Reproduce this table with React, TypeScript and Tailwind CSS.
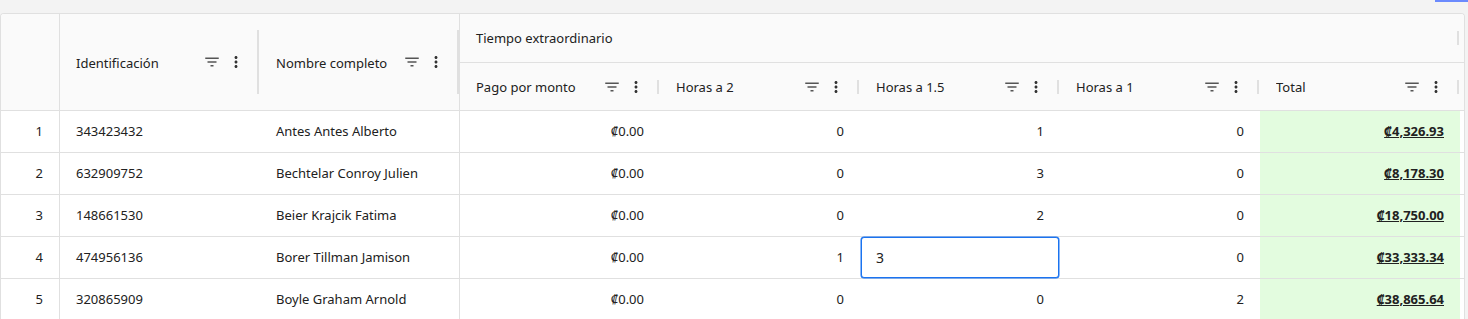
import React from 'react';

type Row = {
    n: number;
    id: string;
    name: string;
    monto: string;
    h2: string;
    h15: string;
    h1: string;
    total: string;
    editing?: boolean;
};

const ROWS: Row[] = [
    { n: 1, id: '343423432', name: 'Antes Antes Alberto', monto: '₡0.00', h2: '0', h15: '1', h1: '0', total: '₡4,326.93' },
    { n: 2, id: '632909752', name: 'Bechtelar Conroy Julien', monto: '₡0.00', h2: '0', h15: '3', h1: '0', total: '₡8,178.30' },
    { n: 3, id: '148661530', name: 'Beier Krajcik Fatima', monto: '₡0.00', h2: '0', h15: '2', h1: '0', total: '₡18,750.00' },
    { n: 4, id: '474956136', name: 'Borer Tillman Jamison', monto: '₡0.00', h2: '1', h15: '3', h1: '0', total: '₡33,333.34', editing: true },
    { n: 5, id: '320865909', name: 'Boyle Graham Arnold', monto: '₡0.00', h2: '0', h15: '0', h1: '2', total: '₡38,865.64' },
];

const SUB_COLUMNS = ['Pago por monto', 'Horas a 2', 'Horas a 1.5', 'Horas a 1', 'Total'];

function FilterIcon() {
    return (
        <svg width="18" height="18" viewBox="0 0 24 24" fill="#555">
            <path d="M10 18h4v-2h-4zM3 6v2h18V6zm3 7h12v-2H6z" />
        </svg>
    );
}

function MoreIcon() {
    return (
        <svg width="18" height="18" viewBox="0 0 24 24" fill="#333">
            <path d="M12 8c1.1 0 2-.9 2-2s-.9-2-2-2-2 .9-2 2 .9 2 2 2m0 2c-1.1 0-2 .9-2 2s.9 2 2 2 2-.9 2-2-.9-2-2-2m0 6c-1.1 0-2 .9-2 2s.9 2 2 2 2-.9 2-2-.9-2-2-2" />
        </svg>
    );
}

function HeaderCell({ title, tall, last }: { title: string; tall?: boolean; last?: boolean }) {
    return (
        <div className={`flex w-[200px] shrink-0 items-center pl-4 ${last ? 'border-r border-[#e0e0e0]' : ''}`}>
            <span className={`flex-1 truncate ${tall ? 'pt-[3px]' : 'pt-[2px]'}`}>{title}</span>
            <span className="flex w-6 justify-center"><FilterIcon /></span>
            <span className="flex w-6 justify-center"><MoreIcon /></span>
            <div className={`ml-[9px] w-[2px] bg-[#e0e0e0] ${tall ? 'h-[64px]' : 'h-[14px]'} ${last ? '' : 'mr-px'}`} />
        </div>
    );
}

export default function App() {
    return (
        <div className="min-h-screen bg-[#f3f3f3] font-['Noto_Sans',sans-serif] text-[13px] text-[#212121]">
            <div className="flex h-[13px] justify-end">
                <div className="h-[2px] w-[33px] bg-[#6b8afd]" />
            </div>
            <div className="w-[1465px] overflow-hidden rounded-t-[4px] border border-b-0 border-[#e0e0e0] bg-white">
                {/* header */}
                <div className="flex border-b border-[#e0e0e0] bg-[#fafafa]">
                    <div className="w-[59px] shrink-0 border-r border-[#e0e0e0]" />
                    <HeaderCell title="Identificación" tall />
                    <HeaderCell title="Nombre completo" tall last />
                    <div className="flex w-[1004px] flex-col">
                        <div className="flex h-[49px] items-center justify-between border-b border-[#e0e0e0] pl-4">
                            <span className="pt-px">Tiempo extraordinario</span>
                            <div className="mr-[5px] h-[14px] w-[2px] bg-[#e0e0e0]" />
                        </div>
                        <div className="flex h-[47px]">
                            {SUB_COLUMNS.map((c) => (
                                <HeaderCell key={c} title={c} />
                            ))}
                        </div>
                    </div>
                </div>

                {/* rows */}
                {ROWS.map((r) => (
                    <div key={r.n} className="flex h-[42px] border-b border-[#e0e0e0]">
                        <div className="flex w-[59px] shrink-0 items-center justify-end border-r border-[#e0e0e0] pr-4">{r.n}</div>
                        <div className="flex w-[200px] shrink-0 items-center pl-4">{r.id}</div>
                        <div className="flex w-[200px] shrink-0 items-center border-r border-[#e0e0e0] pl-4">{r.name}</div>
                        <div className="flex w-[200px] shrink-0 items-center justify-end pr-4">{r.monto}</div>
                        <div className="flex w-[200px] shrink-0 items-center justify-end pr-4">{r.h2}</div>
                        {r.editing ? (
                            <div className="flex w-[200px] shrink-0 px-px">
                                <div className="flex flex-1 items-center rounded-[3px] border border-[#1a73f0] bg-white pl-[14px] text-[14px] shadow-[0_0_0_0.5px_#1a73f0]">
                                    {r.h15}
                                </div>
                            </div>
                        ) : (
                            <div className="flex w-[200px] shrink-0 items-center justify-end pr-4">{r.h15}</div>
                        )}
                        <div className="flex w-[200px] shrink-0 items-center justify-end pr-4">{r.h1}</div>
                        <div className="flex w-[200px] shrink-0 items-center justify-end bg-[#e3fcdf] pr-4 font-bold underline">
                            {r.total}
                        </div>
                        <div className="w-[4px]" />
                    </div>
                ))}
            </div>
        </div>
    );
}
